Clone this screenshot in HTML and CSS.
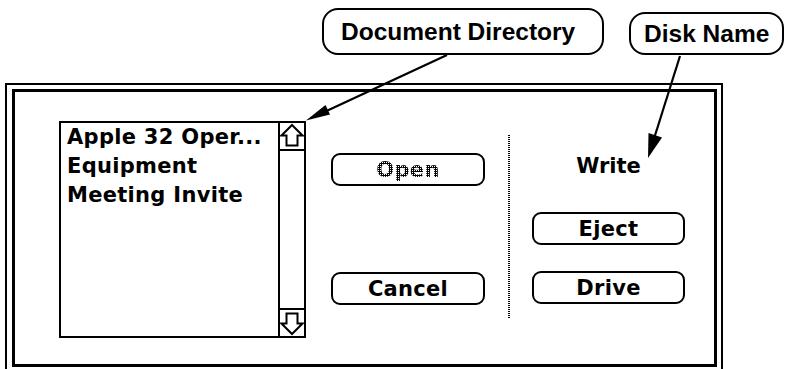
FILE: index.html
```html
<!DOCTYPE html>
<html>
<head>
<meta charset="utf-8">
<link rel="stylesheet" href="styles.css">
</head>
<body>
<div class="page">
  <div class="callouts">
    <div class="bubble bubble-doc">Document Directory</div>
    <div class="bubble bubble-disk">Disk Name</div>
  </div>
  <div class="dialog">
    <div class="dialog-inner">
      <div class="file-list">
        <ul class="files">
          <li>Apple 32 Oper...</li>
          <li>Equipment</li>
          <li>Meeting Invite</li>
        </ul>
        <div class="scrollbar">
          <div class="scroll-btn scroll-up">
            <svg width="24" height="26" viewBox="0 0 24 26"><path d="M12 2 L22.5 12.5 L17.5 12.5 L17.5 22.5 L6.5 22.5 L6.5 12.5 L1.5 12.5 Z" fill="#fff" stroke="#000" stroke-width="2" stroke-linejoin="miter"/></svg>
          </div>
          <div class="track"></div>
          <div class="scroll-btn scroll-down">
            <svg width="24" height="26" viewBox="0 0 24 26"><path d="M12 24 L22.5 13.5 L17.5 13.5 L17.5 3.5 L6.5 3.5 L6.5 13.5 L1.5 13.5 Z" fill="#fff" stroke="#000" stroke-width="2" stroke-linejoin="miter"/></svg>
          </div>
        </div>
      </div>
      <div class="actions">
        <div class="btn btn-disabled"><span class="dither">Open</span></div>
        <div class="btn">Cancel</div>
      </div>
      <div class="divider"></div>
      <div class="drive-panel">
        <div class="disk-name">Write</div>
        <div class="btn btn-eject">Eject</div>
        <div class="btn btn-drive">Drive</div>
      </div>
    </div>
  </div>
  <svg class="arrows" width="785" height="369" viewBox="0 0 785 369">
    <line x1="447" y1="55" x2="320" y2="114" stroke="#000" stroke-width="2.2"/>
    <polygon points="306,120.5 330,114.5 325.5,105" fill="#000"/>
    <line x1="680" y1="56" x2="652" y2="145" stroke="#000" stroke-width="2.2"/>
    <polygon points="648,158 662,137.5 648.5,133" fill="#000"/>
  </svg>
</div>
</body>
</html>
```

FILE: styles.css
```css
html, body {
  margin: 0;
  padding: 0;
  background: #fff;
}

.page {
  position: relative;
  width: 785px;
  height: 369px;
  overflow: hidden;
  color: #000;
  font-family: "DejaVu Sans", sans-serif;
}

.callouts {
  box-sizing: border-box;
  height: 83px;
  padding-top: 8px;
  padding-left: 322px;
  display: flex;
  align-items: flex-start;
  gap: 25px;
}

.bubble {
  box-sizing: border-box;
  border: 2px solid #000;
  border-radius: 16px;
  display: flex;
  align-items: center;
  font-family: "Liberation Sans", Arial, sans-serif;
  font-weight: bold;
  font-size: 24.5px;
  white-space: nowrap;
}

.bubble-doc {
  width: 282px;
  height: 47px;
  padding-left: 17px;
}

.bubble-disk {
  width: 155px;
  height: 43px;
  margin-top: 4px;
  padding-left: 13px;
}

.dialog {
  box-sizing: border-box;
  margin-left: 5px;
  width: 718px;
  border: 2px solid #000;
  padding: 4px 4px 4px 5px;
}

.dialog-inner {
  box-sizing: border-box;
  height: 278px;
  border: 3px solid #000;
  display: flex;
  align-items: flex-start;
}

.file-list {
  box-sizing: border-box;
  margin-left: 44px;
  margin-top: 29px;
  width: 247px;
  height: 217px;
  border: 2px solid #000;
  display: flex;
}

.files {
  flex: 1;
  margin: 0;
  padding: 0 0 0 6px;
  list-style: none;
  font-weight: bold;
  font-size: 21px;
  line-height: 29px;
  letter-spacing: 0.3px;
  white-space: nowrap;
}

.scrollbar {
  width: 24px;
  border-left: 2px solid #000;
  display: flex;
  flex-direction: column;
}

.scroll-btn {
  height: 26px;
  display: flex;
}

.scroll-up {
  border-bottom: 2px solid #000;
}

.scroll-down {
  border-top: 2px solid #000;
}

.track {
  flex: 1;
}

.actions {
  margin-left: 25px;
  margin-top: 61px;
  width: 154px;
  display: flex;
  flex-direction: column;
  gap: 86px;
}

.btn {
  box-sizing: border-box;
  height: 33px;
  border: 2px solid #000;
  border-radius: 9px;
  display: flex;
  align-items: center;
  justify-content: center;
  font-weight: bold;
  font-size: 21px;
  letter-spacing: 0.3px;
}

.dither {
  color: transparent;
  background: repeating-conic-gradient(#000 0 75%, #fff 0 100%) 0 0 / 2px 2px;
  -webkit-background-clip: text;
  background-clip: text;
}

.divider {
  margin-left: 23px;
  margin-top: 43px;
  width: 2px;
  height: 183px;
  background: repeating-linear-gradient(to bottom, #000 0 1px, transparent 1px 2px);
}

.drive-panel {
  margin-left: 22px;
  margin-top: 62px;
  width: 153px;
  display: flex;
  flex-direction: column;
}

.disk-name {
  text-align: center;
  font-weight: bold;
  font-size: 21px;
  line-height: 24px;
}

.btn-eject {
  margin-top: 34px;
}

.btn-drive {
  margin-top: 26px;
}

.arrows {
  position: absolute;
  left: 0;
  top: 0;
  pointer-events: none;
}
```
